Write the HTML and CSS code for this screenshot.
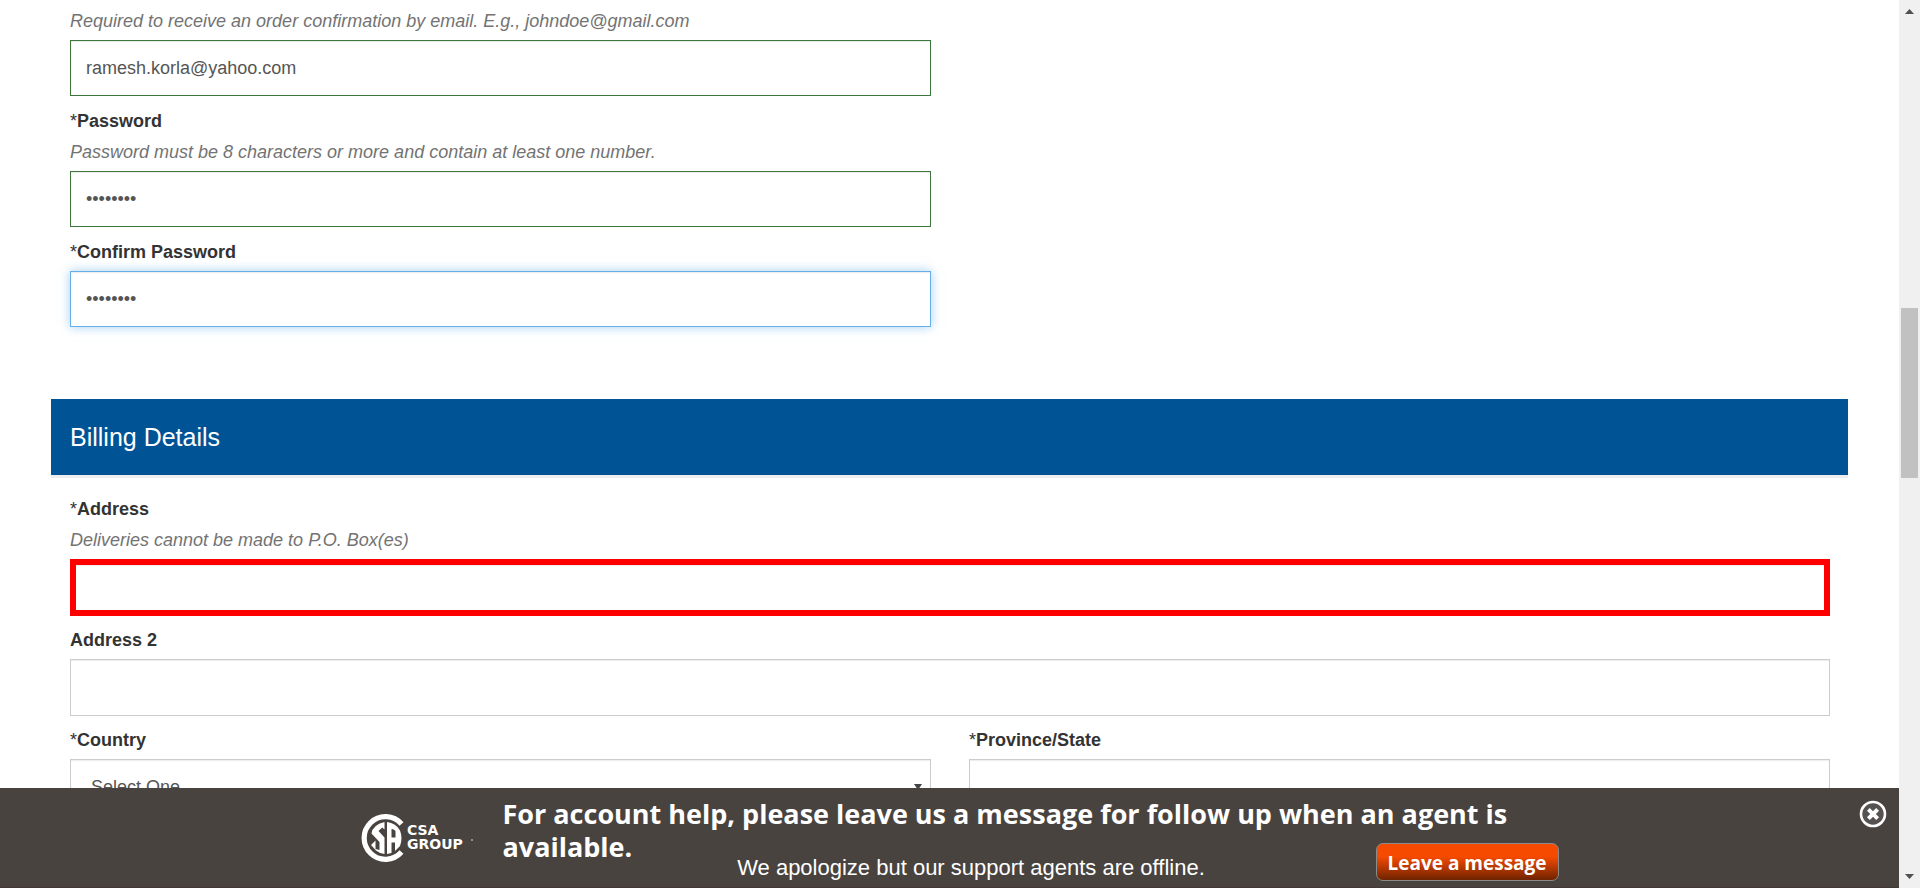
FILE: index.html
```html
<!DOCTYPE html>
<html lang="en">
<head>
<meta charset="utf-8">
<title>Create Account</title>
<link rel="stylesheet" href="styles.css">
</head>
<body>
<div class="page">
  <main class="content">
    <form class="form">
      <section class="group columns">
        <div class="field">
          <p class="hint" id="email-hint">Required to receive an order confirmation by email. E.g., johndoe@gmail.com</p>
          <input class="control valid" type="email" aria-label="Email" aria-describedby="email-hint" value="ramesh.korla@yahoo.com">
          <label class="label" for="password"><span class="star">*</span>Password</label>
          <p class="hint" id="password-hint">Password must be 8 characters or more and contain at least one number.</p>
          <input class="control valid" id="password" type="password" aria-describedby="password-hint" value="12345678">
          <label class="label" for="confirm"><span class="star">*</span>Confirm Password</label>
          <input class="control focused" id="confirm" type="password" value="12345678">
        </div>
      </section>

      <h2 class="section-title">Billing Details</h2>

      <section class="group billing">
        <label class="label" for="address"><span class="star">*</span>Address</label>
        <p class="hint" id="address-hint">Deliveries cannot be made to P.O. Box(es)</p>
        <input class="control invalid" id="address" type="text" aria-describedby="address-hint">
        <label class="label" for="address2">Address 2</label>
        <input class="control" id="address2" type="text">
        <div class="columns">
          <div class="field">
            <label class="label" for="country"><span class="star">*</span>Country</label>
            <div class="select-wrap">
              <select class="control select" id="country"><option>Select One</option></select>
            </div>
          </div>
          <div class="field">
            <label class="label" for="province"><span class="star">*</span>Province/State</label>
            <input class="control" id="province" type="text">
          </div>
        </div>
      </section>
    </form>

    <aside class="chat-bar">
      <div class="chat-inner">
        <svg class="logo" width="116" height="48" viewBox="0 0 116 48" role="img" aria-label="CSA Group">
          <path d="M40.500 10A21.300 21.300 0 1 0 40.500 38" fill="none" stroke="#fff" stroke-width="5.200"/>
          <path d="M23.500 8V15.500L21.200 13.500L17.500 17L23.500 23.500V40Q18.500 39.500 15 36.500L10 31L14.500 26.500V35L18.500 36V28L10.500 19.500Q11.500 11 23.500 8Z" fill="#fff"/>
          <path d="M26 8Q35 9 39 16.500Q42 24 39 32L34 37V28.500H30.500V39L26 40ZM30.500 15V23.500H34.500V17Q33 15 30.500 15Z" fill="#fff" fill-rule="evenodd"/>
          <text class="logo-text" x="46" y="21">CSA</text>
          <text class="logo-text" x="46" y="35">GROUP</text>
          <circle cx="111" cy="26" r="1" fill="#aaa"/>
        </svg>
        <p class="chat-title">For account help, please leave us a message for follow up when an agent is available.</p>
        <p class="chat-note">We apologize but our support agents are offline.</p>
        <button class="chat-button" type="button">Leave a message</button>
      </div>
      <button class="close" type="button" aria-label="Close">
        <svg width="28" height="28" viewBox="0 0 28 28">
          <circle cx="14" cy="14" r="12" fill="#555251" stroke="#fff" stroke-width="2.600"/>
          <path d="M10.800 10.800L17.200 17.200M17.200 10.800L10.800 17.200" stroke="#fff" stroke-width="4" stroke-linecap="square"/>
        </svg>
      </button>
    </aside>
  </main>

  <div class="scrollbar" aria-hidden="true">
    <svg class="arrow" width="9" height="5" viewBox="0 0 9 5"><path d="M0 5L4.500 0L9 5Z" fill="#505050"/></svg>
    <div class="track"><div class="thumb"></div></div>
    <svg class="arrow" width="9" height="5" viewBox="0 0 9 5"><path d="M0 0L4.500 5L9 0Z" fill="#505050"/></svg>
  </div>
</div>
</body>
</html>
```
FILE: styles.css
```css
* {
  box-sizing: border-box;
}

body {
  margin: 0;
  overflow: hidden;
  background: #fff;
  color: #333;
  font-family: "Liberation Sans", Arial, sans-serif;
  font-size: 18px;
}

p,
h2 {
  margin: 0;
}

.page {
  display: flex;
  height: 100vh;
}

.content {
  position: relative;
  flex: 1;
  overflow: hidden;
}

.form {
  padding: 9px 51px 0;
}

.group {
  padding: 0 18px 0 19px;
}

.columns {
  display: grid;
  grid-template-columns: 1fr 1fr;
  gap: 38px;
}

.label {
  display: block;
  margin: 13px 0 7px;
  font-weight: 700;
  line-height: 24px;
}

.star {
  font-weight: 400;
}

.hint {
  margin-bottom: 7px;
  color: #737373;
  font-style: italic;
  line-height: 24px;
}

.control {
  display: block;
  width: 100%;
  height: 56px;
  padding: 0 15px;
  border: 1px solid #ccc;
  border-radius: 0;
  outline: 0;
  background: #fff;
  box-shadow: inset 0 1px 1px rgba(0, 0, 0, 0.075);
  color: #555;
  font-family: inherit;
  font-size: 18px;
}

.valid {
  border-color: #3c763d;
}

.focused {
  border-color: #66afe9;
  box-shadow: inset 0 1px 1px rgba(0, 0, 0, 0.075), 0 0 10px rgba(102, 175, 233, 0.6);
}

.invalid {
  border: 6px solid #f00;
}

.section-title {
  margin-top: 72px;
  padding: 0 19px;
  border-bottom: 3px solid #eee;
  background: #005496;
  color: #fff;
  font-size: 25px;
  font-weight: 400;
  line-height: 76px;
}

.billing {
  padding-top: 7px;
}

.billing .label {
  margin-top: 12px;
}

.billing .control {
  height: 57px;
}

.select-wrap {
  position: relative;
}

.select-wrap::after {
  position: absolute;
  top: 25px;
  right: 9px;
  border: 4px solid transparent;
  border-top: 6px solid #444;
  content: "";
}

.select {
  padding: 0 20px 2px;
  appearance: none;
}

.chat-bar {
  position: absolute;
  right: 0;
  bottom: 0;
  left: 0;
  min-height: 100px;
  border-bottom: 1px solid #433737;
  background: #494340;
  color: #fff;
}

.chat-inner {
  display: grid;
  grid-template-columns: 142px 1fr 183px;
  max-width: 1222px;
  margin: 0 auto;
  padding: 9px 2px 4px 22px;
}

.logo {
  grid-row: 1 / 3;
  margin-top: 17px;
}

.logo-text {
  fill: #fff;
  font-family: "DejaVu Sans", sans-serif;
  font-size: 14px;
  font-weight: 700;
}

.chat-title {
  grid-column: 2 / 4;
  font-family: "Trebuchet MS", "Open Sans", sans-serif;
  font-size: 27px;
  font-weight: 700;
  line-height: 33px;
}

.chat-note {
  margin-top: -10px;
  padding-left: 64px;
  font-size: 22px;
  line-height: 30px;
  text-align: center;
}

.chat-button {
  height: 38px;
  margin-top: -20px;
  padding: 2px 0 0;
  border: 1px solid #8b8b8b;
  border-radius: 7px;
  background: linear-gradient(#f54a00 35%, #6e2300);
  color: #fff;
  font-family: "Trebuchet MS", "Open Sans", sans-serif;
  font-size: 19px;
  font-weight: 700;
}

.close {
  position: absolute;
  top: 12px;
  right: 12px;
  width: 28px;
  height: 28px;
  padding: 0;
  border: 0;
  background: none;
}

.scrollbar {
  display: flex;
  flex-direction: column;
  align-items: center;
  gap: 8px;
  width: 21px;
  padding: 9px 0;
  background: #f0f0f0;
}

.track {
  flex: 1;
  width: 17px;
  padding-top: 286px;
}

.thumb {
  height: 170px;
  background: #c1c1c1;
}
```
